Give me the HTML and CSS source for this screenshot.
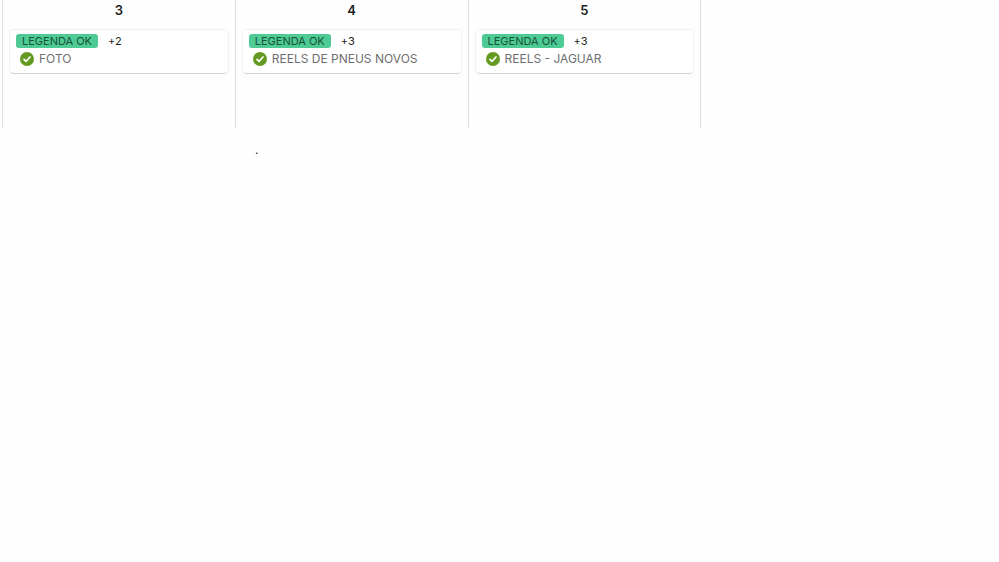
FILE: index.html
```
<!DOCTYPE html>
<html lang="pt-BR">
<head>
  <meta charset="UTF-8">
  <title>Calendário</title>
  <link rel="stylesheet" href="styles.css">
</head>
<body>
  <div class="calendar">
    <div class="day">
      <h2>3</h2>
      <div class="card">
        <div class="labels"><span class="tag">LEGENDA OK</span><span class="more">+2</span></div>
        <div class="task">
          <svg class="check" viewBox="0 0 14 14"><circle cx="7" cy="7" r="7"/><path d="M4 7.3l2 2 4-4.3"/></svg>
          <span>FOTO</span>
        </div>
      </div>
    </div>
    <div class="day">
      <h2>4</h2>
      <div class="card">
        <div class="labels"><span class="tag">LEGENDA OK</span><span class="more">+3</span></div>
        <div class="task">
          <svg class="check" viewBox="0 0 14 14"><circle cx="7" cy="7" r="7"/><path d="M4 7.3l2 2 4-4.3"/></svg>
          <span>REELS DE PNEUS NOVOS</span>
        </div>
      </div>
    </div>
    <div class="day">
      <h2>5</h2>
      <div class="card">
        <div class="labels"><span class="tag">LEGENDA OK</span><span class="more">+3</span></div>
        <div class="task">
          <svg class="check" viewBox="0 0 14 14"><circle cx="7" cy="7" r="7"/><path d="M4 7.3l2 2 4-4.3"/></svg>
          <span>REELS - JAGUAR</span>
        </div>
      </div>
    </div>
  </div>
  <p class="note">.</p>
</body>
</html>
```

FILE: styles.css
```
* {
  box-sizing: border-box;
}
body {
  font-family: Inter, sans-serif;
  background-color: #fefefe;
  color: #1e1f21;
  margin: 0;
}
.calendar {
  display: grid;
  grid-template-columns: repeat(3, 1fr);
  width: 70%;
  margin-left: 2px;
  border-right: 1px solid #dfdfdf;
}
.day {
  border-left: 1px solid #dfdfdf;
  padding: 0 6px 54px;
}
h2 {
  margin: 0 0 9px;
  font-size: 13px;
  line-height: 20px;
  font-weight: 600;
  text-align: center;
}
.card {
  background-color: #fff;
  border: 1px solid #f1f1f1;
  border-bottom-color: #cfcfcf;
  border-radius: 5px;
  padding: 4px 6px;
}
.labels {
  display: flex;
  align-items: center;
  gap: 10px;
  font-size: 11px;
  line-height: 14px;
}
.tag {
  background-color: #4ecb94;
  color: #16523a;
  border-radius: 3px;
  padding: 0 6px;
}
.task {
  display: flex;
  align-items: center;
  gap: 5px;
  margin-top: 2px;
  padding: 0 0 1px 4px;
  color: #6d6e6f;
  font-size: 12px;
  line-height: 18px;
}
.check {
  width: 14px;
  height: 14px;
}
.check circle {
  fill: #659a20;
}
.check path {
  fill: none;
  stroke: #fff;
  stroke-width: 1.7;
  stroke-linecap: round;
  stroke-linejoin: round;
}
.note {
  margin: 14px 0 0;
  padding-left: 255px;
  font-size: 12px;
  line-height: 16px;
}
```
